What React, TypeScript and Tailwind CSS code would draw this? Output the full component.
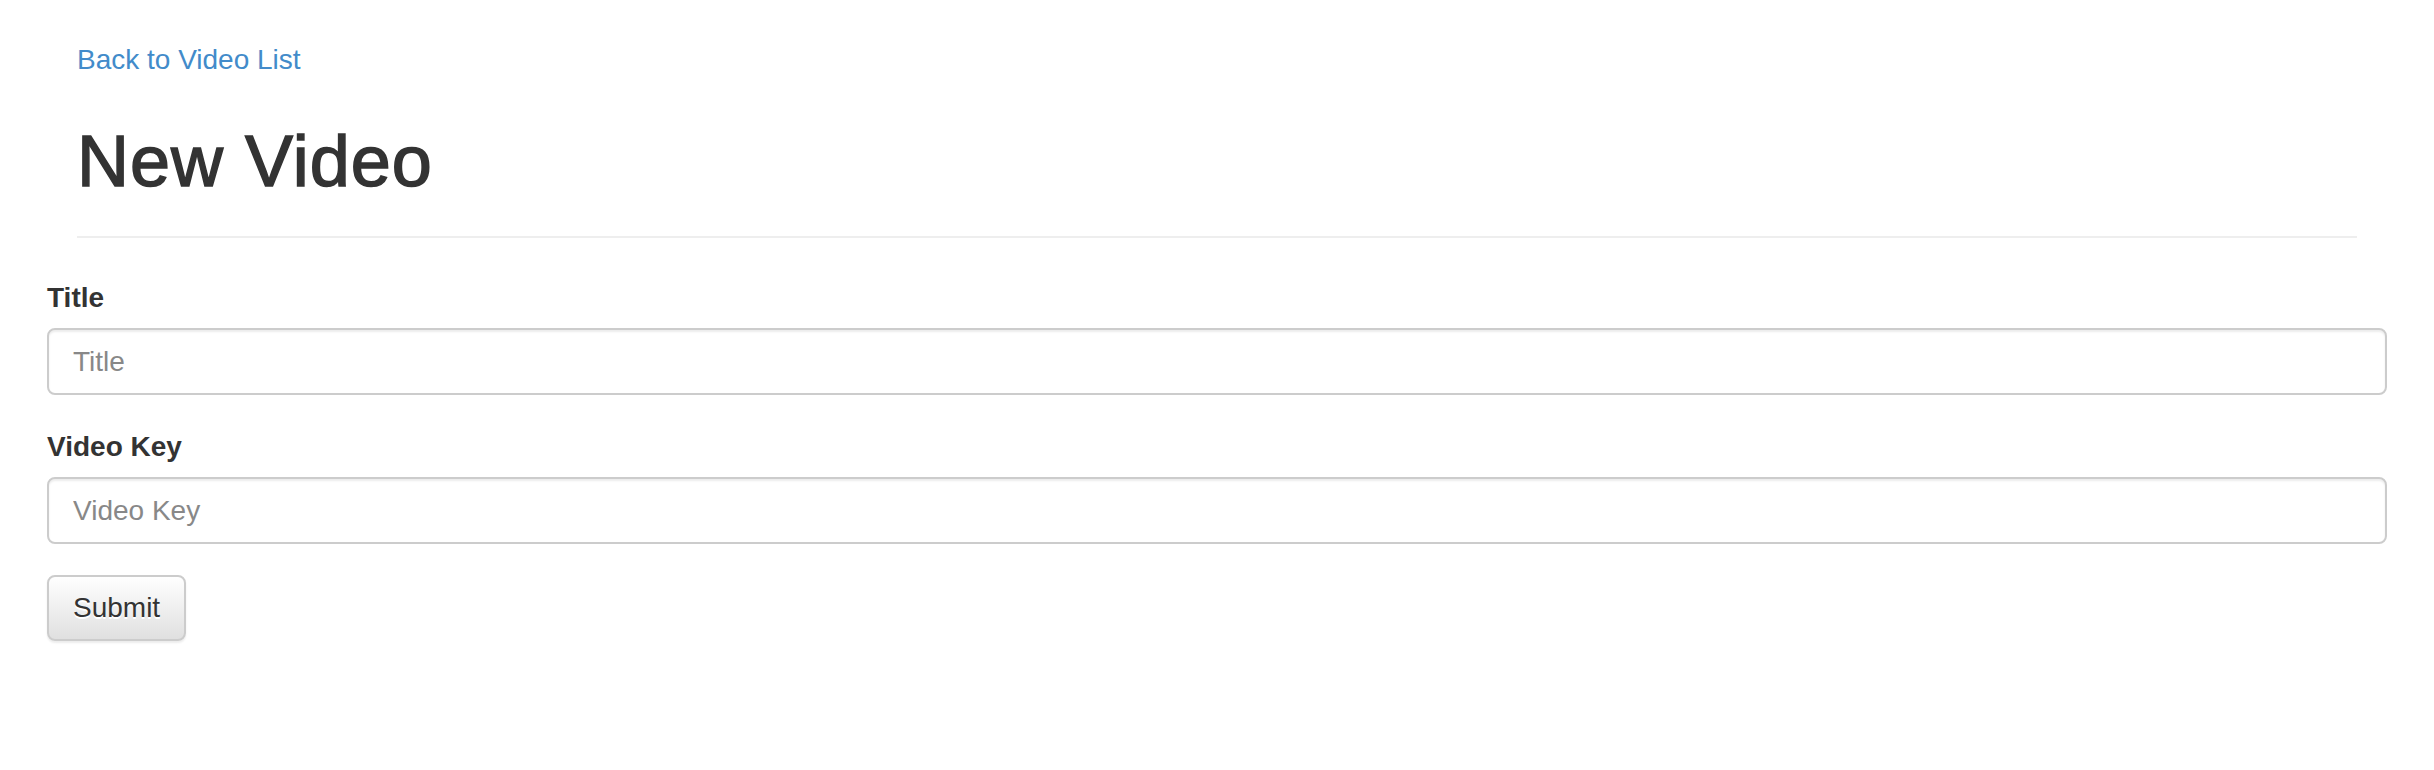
import { useState } from 'react';

/**
 * "New Video" form page: back link, page header with rule, and a two-field
 * form (title + video key) with a default-style submit button.
 */
export default function App() {
    const [title, setTitle] = useState('');
    const [videoKey, setVideoKey] = useState('');

    return (
        <div className="min-h-[770px] w-full bg-white text-[#333333] font-['Liberation_Sans',Arial,sans-serif]">
            <div className="mx-[77px] pt-[40px]">
                <a href="#" className="block w-fit text-[28px] leading-[40px] text-[#428bca] hover:underline">
                    Back to Video List
                </a>
                <div className="mt-[42px] pb-[35px] border-b-2 border-[#eeeeee]">
                    <h1 className="text-[72px] leading-[79px] font-normal tracking-[1px] [-webkit-text-stroke:1.5px_#333333]">
                        New Video
                    </h1>
                </div>
            </div>

            <form onSubmit={(e) => e.preventDefault()} className="mx-[47px] mt-[40px]">
                <Field label="Title" value={title} onChange={setTitle} className="mb-[32px]" />
                <Field label="Video Key" value={videoKey} onChange={setVideoKey} className="mb-[31px]" />
                <button
                    type="submit"
                    className="h-[66px] px-[24px] text-[28px] leading-[40px] text-[#333333] border-2 border-[#cccccc] rounded-[8px] bg-gradient-to-b from-white to-[#e0e0e0] shadow-[inset_0_2px_0_rgba(255,255,255,0.15),0_2px_2px_rgba(0,0,0,0.075)] [text-shadow:0_2px_0_#fff]"
                >
                    Submit
                </button>
            </form>
        </div>
    );
}

function Field({ label, value, onChange, className }: {
    label: string;
    value: string;
    onChange: (v: string) => void;
    className: string;
}) {
    return (
        <div className={className}>
            <label className="block mb-[10px] text-[28px] leading-[40px] font-bold">{label}</label>
            <input
                type="text"
                value={value}
                onChange={(e) => onChange(e.target.value)}
                placeholder={label}
                className="block w-full h-[67px] px-[24px] text-[28px] text-[#555555] bg-white border-2 border-[#cccccc] rounded-[8px] shadow-[inset_0_2px_2px_rgba(0,0,0,0.075)] placeholder-[#888888] focus:outline-none"
            />
        </div>
    );
}
